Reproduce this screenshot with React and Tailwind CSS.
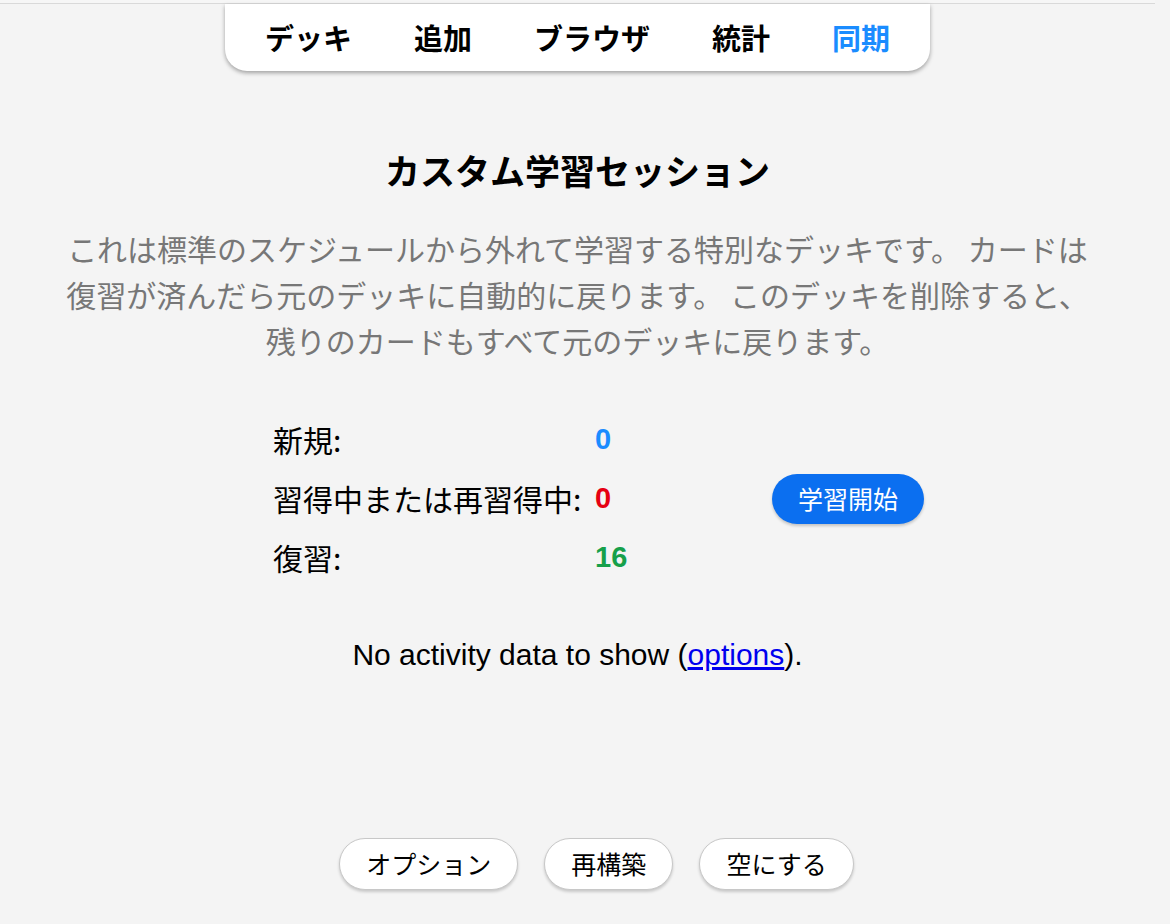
const JP = { fontFamily: '"Noto Sans CJK JP", "Liberation Sans", sans-serif' }

const NAV = ['デッキ', '追加', 'ブラウザ', '統計', '同期']

function NavBar() {
  return (
    <div className="flex justify-center">
      <nav className="flex h-[67px] items-center gap-[62px] rounded-b-[22px] bg-white px-[40px] shadow-[0_2px_4px_rgba(0,0,0,0.35)]">
        {NAV.map((n, i) => (
          <span
            key={n}
            className={`text-[29px] font-bold leading-none ${i === NAV.length - 1 ? 'text-[#1a8cff]' : 'text-black'}`}
          >
            {n}
          </span>
        ))}
      </nav>
    </div>
  )
}

function Stat({ label, value, color }) {
  return (
    <>
      <div className="flex h-[59px] items-center text-[30px] text-black">{label}</div>
      <div className={`flex h-[59px] items-center text-[29px] font-bold ${color}`} style={{ fontFamily: '"Liberation Sans", sans-serif' }}>
        {value}
      </div>
    </>
  )
}

function PillButton({ children }) {
  return (
    <button className="h-[52px] rounded-full border border-[#c8c8c8] bg-white px-[26px] text-[25px] text-black shadow-[0_2px_3px_rgba(0,0,0,0.18)]">
      {children}
    </button>
  )
}

export default function App() {
  return (
    <div className="min-h-[924px] bg-[#f4f4f4] pr-[15px]" style={JP}>
      <div className="h-[4px] border-b border-[#d9d9d9] bg-[#f6f6f6]" />
      <NavBar />

      <h1 className="mt-[79px] text-center text-[35px] font-bold leading-[40px] text-black">
        カスタム学習セッション
      </h1>

      <p className="mt-[35px] whitespace-nowrap text-center text-[30px] leading-[46px] text-[#777]">
        これは標準のスケジュールから外れて学習する特別なデッキです。 カードは
        <br />
        復習が済んだら元のデッキに自動的に戻ります。 このデッキを削除すると、
        <br />
        残りのカードもすべて元のデッキに戻ります。
      </p>

      <div className="mt-[47px] flex justify-center pl-[42px]">
        <div className="grid grid-cols-[322px_177px_152px] items-center">
          <Stat label="新規:" value="0" color="text-[#1a8cff]" />
          <div className="row-span-3 flex items-center">
            <button className="h-[50px] w-[152px] rounded-full bg-[#0b6ff0] text-[25px] text-white shadow-[0_2px_3px_rgba(0,0,0,0.2)]">
              学習開始
            </button>
          </div>
          <Stat label="習得中または再習得中:" value="0" color="text-[#e60012]" />
          <Stat label="復習:" value="16" color="text-[#16a04a]" />
        </div>
      </div>

      <div
        className="mt-[48px] text-center text-[30px] leading-[40px] text-black"
        style={{ fontFamily: '"Liberation Sans", sans-serif' }}
      >
        No activity data to show (<a href="#" className="text-[#0000ee] underline">options</a>).
      </div>

      <div className="mt-[163px] flex justify-center gap-[26px] pl-[38px]">
        <PillButton>オプション</PillButton>
        <PillButton>再構築</PillButton>
        <PillButton>空にする</PillButton>
      </div>
    </div>
  )
}
